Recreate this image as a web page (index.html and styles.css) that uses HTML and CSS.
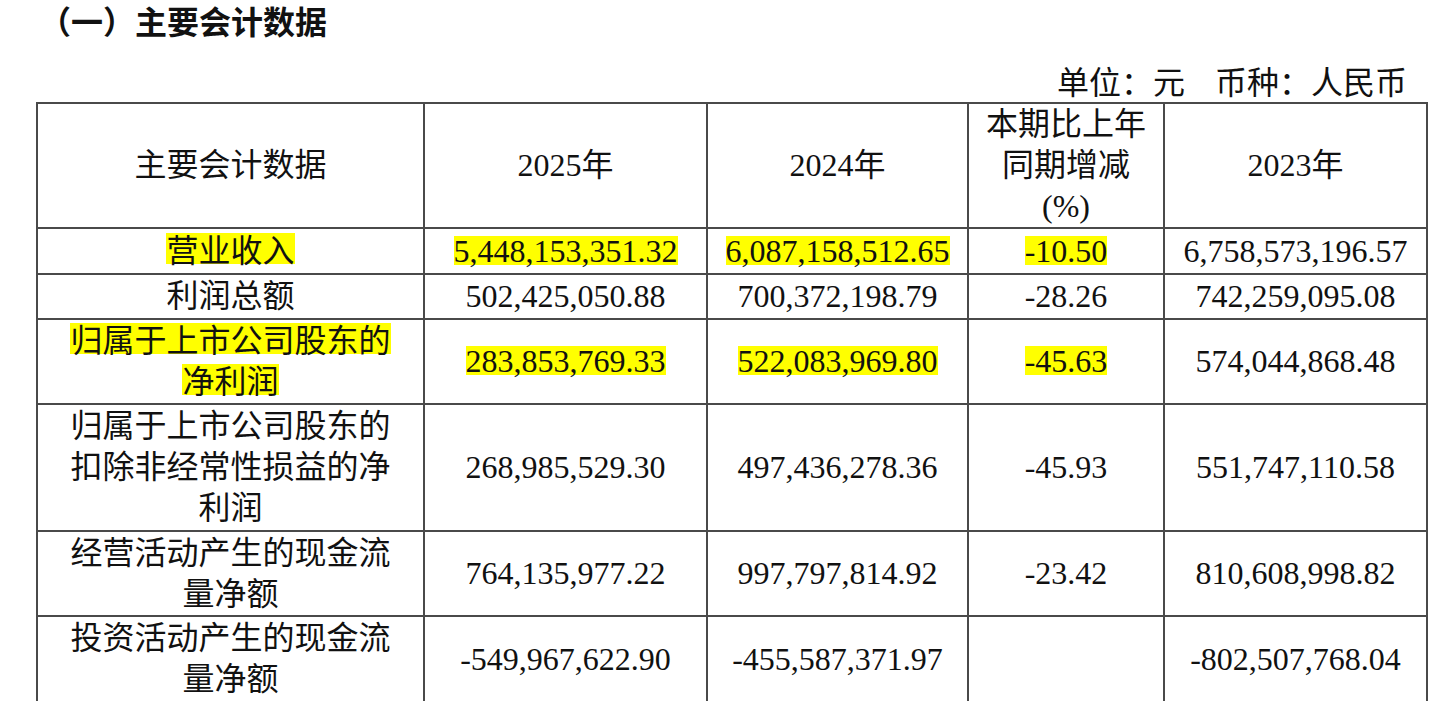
FILE: index.html
```html
<!DOCTYPE html>
<html lang="zh-CN">
<head>
<meta charset="utf-8">
<title>主要会计数据</title>
<link rel="stylesheet" href="styles.css">
</head>
<body>
<div class="page">
  <h2 class="title">（一）主要会计数据</h2>
  <div class="unit"><span>单位：元</span><span>币种：人民币</span></div>
  <table class="data">
    <colgroup>
      <col class="c1"><col class="c2"><col class="c3"><col class="c4"><col class="c5">
    </colgroup>
    <tr class="r-head">
      <td>主要会计数据</td>
      <td>2025年</td>
      <td>2024年</td>
      <td>本期比上年<br>同期增减<br>(%)</td>
      <td>2023年</td>
    </tr>
    <tr class="r-1">
      <td><span class="hl-cn">营业收入</span></td>
      <td><span class="hl">5,448,153,351.32</span></td>
      <td><span class="hl">6,087,158,512.65</span></td>
      <td><span class="hl">-10.50</span></td>
      <td>6,758,573,196.57</td>
    </tr>
    <tr class="r-2">
      <td>利润总额</td>
      <td>502,425,050.88</td>
      <td>700,372,198.79</td>
      <td>-28.26</td>
      <td>742,259,095.08</td>
    </tr>
    <tr class="r-3">
      <td><span class="hl-cn">归属于上市公司股东的<br>净利润</span></td>
      <td><span class="hl">283,853,769.33</span></td>
      <td><span class="hl">522,083,969.80</span></td>
      <td><span class="hl">-45.63</span></td>
      <td>574,044,868.48</td>
    </tr>
    <tr class="r-4">
      <td>归属于上市公司股东的<br>扣除非经常性损益的净<br>利润</td>
      <td>268,985,529.30</td>
      <td>497,436,278.36</td>
      <td>-45.93</td>
      <td>551,747,110.58</td>
    </tr>
    <tr class="r-5">
      <td>经营活动产生的现金流<br>量净额</td>
      <td>764,135,977.22</td>
      <td>997,797,814.92</td>
      <td>-23.42</td>
      <td>810,608,998.82</td>
    </tr>
    <tr class="r-6">
      <td>投资活动产生的现金流<br>量净额</td>
      <td>-549,967,622.90</td>
      <td>-455,587,371.97</td>
      <td></td>
      <td>-802,507,768.04</td>
    </tr>
  </table>
</div>
</body>
</html>
```

FILE: styles.css
```css
html, body {
  margin: 0;
  padding: 0;
  background: #ffffff;
}

.page {
  width: 1438px;
  color: #111111;
  font-family: "Liberation Serif", "Noto Sans CJK SC", serif;
}

.title {
  margin: 0;
  padding-left: 39px;
  height: 40px;
  font-family: "Noto Sans CJK SC", sans-serif;
  font-weight: 700;
  font-size: 32px;
  line-height: 40px;
  color: #111111;
}

.unit {
  display: flex;
  justify-content: flex-end;
  gap: 30px;
  margin-top: 20px;
  padding-right: 31px;
  height: 40px;
  font-family: "Noto Sans CJK SC", sans-serif;
  font-size: 32px;
  line-height: 40px;
}

.data {
  margin-top: 2px;
  margin-left: 36px;
  width: 1392px;
  table-layout: fixed;
  border-collapse: collapse;
  font-size: 32px;
  line-height: 41px;
}

.c1 { width: 387px; }
.c2 { width: 283px; }
.c3 { width: 261px; }
.c4 { width: 196px; }
.c5 { width: 263px; }

.data td {
  border: 2px solid #4a4a4a;
  padding: 0;
  text-align: center;
  vertical-align: middle;
  white-space: nowrap;
}

.r-head td { height: 120px; }
.r-1 td { height: 44px; }
.r-2 td { height: 43px; }
.r-3 td { height: 83px; }
.r-4 td { height: 125px; }
.r-5 td { height: 83px; }
.r-6 td { height: 84px; }

.hl {
  background: linear-gradient(to bottom, transparent 3px, #ffff00 3px, #ffff00 32px, transparent 32px);
  -webkit-box-decoration-break: clone;
  box-decoration-break: clone;
}

.hl-cn {
  background: linear-gradient(to bottom, transparent 0px, #ffff00 0px, #ffff00 31px, transparent 31px);
  -webkit-box-decoration-break: clone;
  box-decoration-break: clone;
}
```
